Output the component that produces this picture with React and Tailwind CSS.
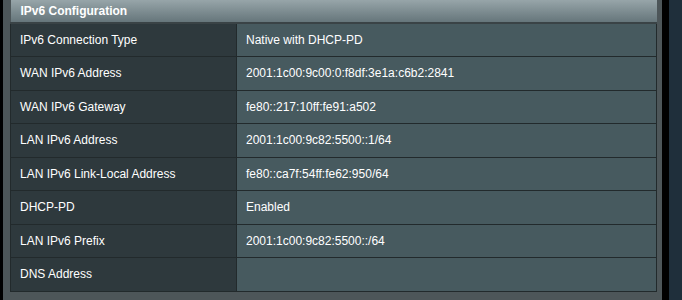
import React from "react";

const rows = [
  ["IPv6 Connection Type", "Native with DHCP-PD"],
  ["WAN IPv6 Address", "2001:1c00:9c00:0:f8df:3e1a:c6b2:2841"],
  ["WAN IPv6 Gateway", "fe80::217:10ff:fe91:a502"],
  ["LAN IPv6 Address", "2001:1c00:9c82:5500::1/64"],
  ["LAN IPv6 Link-Local Address", "fe80::ca7f:54ff:fe62:950/64"],
  ["DHCP-PD", "Enabled"],
  ["LAN IPv6 Prefix", "2001:1c00:9c82:5500::/64"],
  ["DNS Address", ""],
];

const App = () => {
  return (
    <div className="flex h-[300px] w-[682px] overflow-hidden bg-[#1f2f3b] font-['Liberation_Sans',Arial,sans-serif]">
      {/* Panel */}
      <div className="flex h-full w-[669px] border-l-[3px] border-r-[7px] border-black bg-[#4d5659]">
        <div className="ml-[7px] mr-[5px] flex-1">
          <table className="w-full border-collapse text-[12px] text-white">
            <thead>
              <tr>
                <th
                  colSpan={2}
                  className="h-[23px] border-b-2 border-[#3a4346] bg-gradient-to-b from-[#97a5a9] to-[#66767b] px-[10px] text-left font-bold"
                >
                  IPv6 Configuration
                </th>
              </tr>
            </thead>
            <tbody>
              {rows.map(([label, value]) => (
                <tr key={label} className="h-[33.5px]">
                  <td className="w-[226px] border border-[#222a2c] bg-[#2e393d] px-[9px]">
                    {label}
                  </td>
                  <td className="border border-[#222a2c] bg-[#475a5f] px-[9px]">
                    {value}
                  </td>
                </tr>
              ))}
            </tbody>
          </table>
        </div>
      </div>
    </div>
  );
};

export default App;
